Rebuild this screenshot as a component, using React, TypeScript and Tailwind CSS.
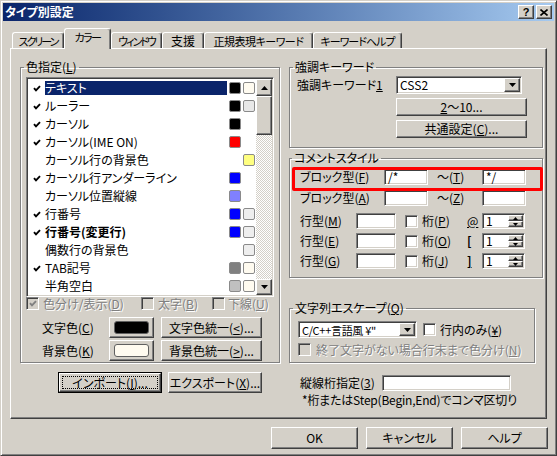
import React from "react";

const RAISED =
  "bg-[#d4d0c8] border border-t-white border-l-white border-r-[#404040] border-b-[#404040] shadow-[inset_-1px_-1px_0_#808080]";
const SUNKEN =
  "border border-t-[#808080] border-l-[#808080] border-r-white border-b-white shadow-[inset_1px_1px_0_#404040,inset_-1px_-1px_0_#d4d0c8]";
const GROUP = "border border-[#808080] shadow-[1px_1px_0_#fff,inset_1px_1px_0_#fff]";
const GREY = "text-[#808080] [text-shadow:1px_1px_0_#fff]";

type Kids = { children?: React.ReactNode; className?: string };

function U({ children }: Kids) {
  return <span className="underline underline-offset-1 decoration-1">{children}</span>;
}

function Tick({ color = "#000" }: { color?: string }) {
  return (
    <svg width="8" height="7" viewBox="0 0 8 7">
      <path d="M1 3.2 3 5.4 7 1.2" fill="none" stroke={color} strokeWidth="1.9" />
    </svg>
  );
}

function Arrow({ up = false }: { up?: boolean }) {
  return (
    <svg width="7" height="4" viewBox="0 0 7 4">
      <path d={up ? "M3.5 0 7 4H0Z" : "M0 0h7L3.5 4Z"} fill="#000" />
    </svg>
  );
}

function SmallArrow({ up = false }: { up?: boolean }) {
  return (
    <svg width="5" height="3" viewBox="0 0 5 3">
      <path d={up ? "M2.5 0 5 3H0Z" : "M0 0h5L2.5 3Z"} fill="#000" />
    </svg>
  );
}

function Btn({ children, className = "" }: Kids) {
  return <div className={`${RAISED} flex items-center justify-center whitespace-nowrap ${className}`}>{children}</div>;
}

function Edit({ children, className = "" }: Kids) {
  return <div className={`${SUNKEN} bg-white flex items-center pl-[3px] ${className}`}>{children}</div>;
}

function Combo({ children, className = "" }: Kids) {
  return (
    <div className={`${SUNKEN} bg-white flex p-[1px] ${className}`}>
      <div className="flex-1 min-w-0 flex items-center pl-[2px] whitespace-nowrap">{children}</div>
      <div className={`${RAISED} w-[16px] shrink-0 flex items-center justify-center`}>
        <Arrow />
      </div>
    </div>
  );
}

function Spin({ className = "" }: Kids) {
  return (
    <div className={`${SUNKEN} bg-white flex p-[1px] ${className}`}>
      <div className="flex-1 pl-[2px] flex items-center">1</div>
      <div className="w-[15px] flex flex-col">
        <div className={`${RAISED} flex-1 flex items-center justify-center`}>
          <SmallArrow up />
        </div>
        <div className={`${RAISED} flex-1 flex items-center justify-center`}>
          <SmallArrow />
        </div>
      </div>
    </div>
  );
}

function Check({ on = false, disabled = false, className = "" }: { on?: boolean; disabled?: boolean; className?: string }) {
  return (
    <span
      className={`${SUNKEN} w-[13px] h-[13px] shrink-0 flex items-center justify-center ${
        disabled ? "bg-[#d4d0c8]" : "bg-white"
      } ${className}`}
    >
      {on && <Tick color={disabled ? "#808080" : "#000"} />}
    </span>
  );
}

type Item = { label: React.ReactNode; check: boolean; fg?: string; bg?: string; sel?: boolean; bold?: boolean };

const items: Item[] = [
  { label: "テキスト", check: true, fg: "bg-black", bg: "bg-[#fffbf0]", sel: true },
  { label: "ルーラー", check: true, fg: "bg-black", bg: "bg-[#e8e8e8]" },
  { label: "カーソル", check: true, fg: "bg-black" },
  { label: "カーソル(IME ON)", check: true, fg: "bg-[#ff0000]" },
  { label: "カーソル行の背景色", check: false, bg: "bg-[#ffff80]" },
  { label: "カーソル行アンダーライン", check: true, fg: "bg-[#0000ff]" },
  { label: "カーソル位置縦線", check: false, fg: "bg-[#8080ff]" },
  { label: "行番号", check: true, fg: "bg-[#0000ff]", bg: "bg-[#eeeeee]" },
  { label: "行番号(変更行)", check: true, fg: "bg-[#0000ff]", bg: "bg-[#eeeeee]", bold: true },
  { label: "偶数行の背景色", check: false, bg: "bg-[#eeeeee]" },
  { label: "TAB記号", check: true, fg: "bg-[#808080]", bg: "bg-[#fffbf0]" },
  { label: "半角空白", check: false, fg: "bg-[#c0c0c0]", bg: "bg-[#fffbf0]" },
];

function Swatch({ color }: { color?: string }) {
  if (!color) return <span className="w-[12px] h-[12px] ml-[2px] shrink-0" />;
  return <span className={`w-[12px] h-[12px] ml-[2px] shrink-0 rounded-[2px] border border-[#8a8a8a] ${color}`} />;
}

function ColorList() {
  return (
    <div className={`${SUNKEN} bg-white w-[248px] h-[220px] flex p-[1px]`}>
      <div className="w-[228px] flex flex-col overflow-hidden">
        {items.map((it, i) => (
          <div key={i} className="flex items-center h-[18px] shrink-0">
            <div className="w-[17px] pl-[5px] flex items-center">{it.check && <Tick />}</div>
            <div
              className={`w-[182px] h-[14px] flex items-center whitespace-nowrap ${
                it.sel ? "bg-[#0a246a] text-white" : ""
              } ${it.bold ? "font-bold" : ""}`}
            >
              {it.label}
            </div>
            <Swatch color={it.fg} />
            <Swatch color={it.bg} />
          </div>
        ))}
      </div>
      <div className="w-[16px] flex flex-col bg-[image:repeating-conic-gradient(#d4d0c8_0%_25%,#fff_0%_50%)] bg-[length:2px_2px]">
        <div className={`${RAISED} h-[17px] flex items-center justify-center`}>
          <Arrow up />
        </div>
        <div className={`${RAISED} h-[39px]`} />
        <div className="flex-1" />
        <div className={`${RAISED} h-[16px] flex items-center justify-center`}>
          <Arrow />
        </div>
      </div>
    </div>
  );
}

function Tab({ children, sel = false, className = "" }: Kids & { sel?: boolean }) {
  return (
    <div
      className={`border-t border-l border-r border-t-white border-l-white border-r-[#404040] shadow-[inset_-1px_0_0_#808080] rounded-t-[3px] bg-[#d4d0c8] flex justify-center whitespace-nowrap ${
        sel ? "h-[21px] -mb-[1px] relative z-10 pt-[1px]" : "h-[16px] items-center"
      } ${className}`}
    >
      {children}
    </div>
  );
}

export default function App() {
  return (
    <div className="w-[557px] h-[456px] bg-[#d4d0c8] border border-t-[#d4d0c8] border-l-[#d4d0c8] border-r-[#404040] border-b-[#404040] shadow-[inset_1px_1px_0_#fff,inset_-1px_-1px_0_#808080] p-[2px] flex flex-col text-[12px] leading-[14px] text-black font-[family-name:'Noto_Sans_CJK_JP',sans-serif] [font-feature-settings:'palt'] overflow-hidden">
      {/* title bar */}
      <div className="h-[18px] shrink-0 flex items-center bg-linear-to-r from-[#0a246a] to-[#a6caf0] pl-[2px] pr-[2px]">
        <span className="text-white font-bold text-[12px]">タイプ別設定</span>
        <div className="ml-auto flex gap-[2px]">
          <div className={`${RAISED} w-[16px] h-[14px] flex items-center justify-center font-bold text-[11px] leading-none font-[family-name:'Liberation_Sans',sans-serif]`}>
            ?
          </div>
          <div className={`${RAISED} w-[16px] h-[14px] flex items-center justify-center`}>
            <svg width="8" height="7" viewBox="0 0 8 7">
              <path d="M0.5 0.5 7.5 6.5M7.5 0.5 0.5 6.5" stroke="#000" strokeWidth="1.6" />
            </svg>
          </div>
        </div>
      </div>

      {/* tabs */}
      <div className="mt-[7px] h-[20px] shrink-0 flex items-end pl-[9px] text-[11px]">
        <Tab className="w-[52px] tracking-[-2px]">スクリーン</Tab>
        <Tab sel className="w-[47px] tracking-[-1.5px]">カラー</Tab>
        <Tab className="w-[51px] tracking-[-2px]">ウィンドウ</Tab>
        <Tab className="w-[42px] text-[12px]">支援</Tab>
        <Tab className="w-[109px] tracking-[-0.5px]">正規表現キーワード</Tab>
        <Tab className="w-[89px] tracking-[-1px]">キーワードヘルプ</Tab>
      </div>

      {/* tab panel */}
      <div className="ml-[7px] w-[537px] h-[371px] shrink-0 border border-t-white border-l-white border-r-[#404040] border-b-[#404040] shadow-[inset_-1px_-1px_0_#808080] flex pl-[9px] pt-[11px]">
        {/* left column */}
        <div className="w-[261px] flex flex-col">
          <fieldset className={`${GROUP} w-[260px]`}>
            <legend className="ml-[3px] px-[2px] leading-[14px]">
              色指定(<U>L</U>)
            </legend>
            <div className="pl-[5px] pt-[3px] pb-[1px]">
              <ColorList />
              <div className="flex items-center h-[13px]">
                <div className="w-[115px] flex items-center">
                  <Check on disabled />
                  <span className={`ml-[4px] ${GREY}`}>
                    色分け/表示(<U>D</U>)
                  </span>
                </div>
                <div className="w-[71px] flex items-center">
                  <Check disabled />
                  <span className={`ml-[4px] ${GREY}`}>
                    太字(<U>B</U>)
                  </span>
                </div>
                <div className="flex items-center">
                  <Check disabled />
                  <span className={`ml-[3px] ${GREY}`}>
                    下線(<U>U</U>)
                  </span>
                </div>
              </div>
              <div className="mt-[7px] flex items-center h-[21px]">
                <span className="ml-[16px] w-[67px]">
                  文字色(<U>C</U>)
                </span>
                <div className={`${RAISED} w-[45px] h-[21px] flex items-center justify-center`}>
                  <div className="w-[35px] h-[13px] rounded-[3px] border border-[#606060] bg-black" />
                </div>
                <Btn className="ml-[7px] w-[101px] h-[21px]">
                  文字色統一(<U>&lt;</U>)...
                </Btn>
              </div>
              <div className="mt-[2px] flex items-center h-[21px]">
                <span className="ml-[16px] w-[67px]">
                  背景色(<U>K</U>)
                </span>
                <div className={`${RAISED} w-[45px] h-[21px] flex items-center justify-center`}>
                  <div className="w-[35px] h-[13px] rounded-[3px] border border-[#606060] bg-[#fffbf0]" />
                </div>
                <Btn className="ml-[7px] w-[101px] h-[21px]">
                  背景色統一(<U>&gt;</U>)...
                </Btn>
              </div>
            </div>
          </fieldset>
          <div className="mt-[9px] flex gap-[6px] pl-[38px]">
            <div className="w-[104px] h-[21px] border border-black">
              <div className={`${RAISED} w-full h-full p-[2px]`}>
                <div className="w-full h-full border border-dotted border-black flex items-center justify-center">
                  インポート(<U>I</U>)...
                </div>
              </div>
            </div>
            <Btn className="w-[94px] h-[21px]">
              エクスポート(<U>X</U>)...
            </Btn>
          </div>
        </div>

        {/* right column */}
        <div className="ml-[8px] w-[254px] flex flex-col">
          <fieldset className={`${GROUP} w-[254px]`}>
            <legend className="ml-[3px] px-[2px] leading-[14px]">強調キーワード</legend>
            <div className="pl-[7px] pt-[2px] pb-[9px]">
              <div className="flex items-center h-[18px]">
                <span className="w-[99px]">
                  強調キーワード<U>1</U>
                </span>
                <Combo className="w-[126px] h-[18px]">CSS2</Combo>
              </div>
              <Btn className="mt-[4px] ml-[99px] w-[131px] h-[18px]">
                <U>2</U>〜10...
              </Btn>
              <Btn className="mt-[4px] ml-[99px] w-[131px] h-[18px]">
                共通設定(<U>C</U>)...
              </Btn>
            </div>
          </fieldset>

          <fieldset className={`${GROUP} w-[254px] mt-[3px]`}>
            <legend className="ml-[2px] px-[2px] leading-[14px]">コメントスタイル</legend>
            <div className="relative pl-[10px] pt-[4px] pb-[8px]">
              <div className="flex items-center h-[16px]">
                <span className="w-[84px]">
                  ブロック型(<U>F</U>)
                </span>
                <Edit className="w-[44px] h-[16px]">/*</Edit>
                <span className="ml-[9px] w-[45px]">
                  〜(<U>T</U>)
                </span>
                <Edit className="w-[44px] h-[16px]">*/</Edit>
              </div>
              <div className="mt-[5px] flex items-center h-[16px]">
                <span className="w-[84px]">
                  ブロック型(<U>A</U>)
                </span>
                <Edit className="w-[44px] h-[16px]" />
                <span className="ml-[9px] w-[45px]">
                  〜(<U>Z</U>)
                </span>
                <Edit className="w-[44px] h-[16px]" />
              </div>
              {[
                { l: "M", p: "P", b: "@" },
                { l: "E", p: "O", b: "[" },
                { l: "G", p: "J", b: "]" },
              ].map((r, i) => (
                <div key={i} className={`${i === 0 ? "mt-[7px]" : "mt-[4px]"} flex items-center h-[16px]`}>
                  <span className="w-[56px]">
                    行型(<U>{r.l}</U>)
                  </span>
                  <Edit className="w-[40px] h-[16px]" />
                  <Check className="ml-[9px]" />
                  <span className="ml-[4px] w-[45px]">
                    桁(<U>{r.p}</U>)
                  </span>
                  <span className={`w-[15px] ${i === 0 ? "" : "font-bold"}`}>
                    <U>{r.b}</U>
                  </span>
                  <Spin className="w-[43px] h-[16px]" />
                </div>
              ))}
              <div className="absolute left-[2px] top-[2px] w-[251px] h-[24px] border-[3px] border-[#ff0000] rounded-[2px]" />
            </div>
          </fieldset>

          <fieldset className={`${GROUP} w-[246px] mt-[23px]`}>
            <legend className="ml-[3px] px-[2px] leading-[14px]">
              文字列エスケープ(<U>Q</U>)
            </legend>
            <div className="pl-[8px] pt-[6px] pb-[6px]">
              <div className="flex items-center h-[17px]">
                <Combo className="w-[119px] h-[17px] text-[11px] tracking-[-0.3px]">C/C++言語風 ¥"</Combo>
                <Check className="ml-[6px]" />
                <span className="ml-[4px]">
                  行内のみ(<U>¥</U>)
                </span>
              </div>
              <div className="mt-[5px] flex items-center h-[13px]">
                <Check disabled />
                <span className={`ml-[5px] ${GREY}`}>
                  終了文字がない場合行末まで色分け(<U>N</U>)
                </span>
              </div>
            </div>
          </fieldset>

          <div className="mt-[12px] flex items-center h-[16px] pl-[11px]">
            <span className="w-[82px]">
              縦線桁指定(<U>3</U>)
            </span>
            <Edit className="w-[129px] h-[16px]" />
          </div>
          <div className="mt-[2px] h-[14px] pl-[13px] whitespace-nowrap tracking-[-0.2px]">
            *桁またはStep(Begin,End)でコンマ区切り
          </div>
        </div>
      </div>

      {/* dialog buttons */}
      <div className="mt-[8px] flex gap-[8px] pl-[268px]">
        <Btn className="w-[87px] h-[22px]">OK</Btn>
        <Btn className="w-[87px] h-[22px]">キャンセル</Btn>
        <Btn className="w-[87px] h-[22px]">ヘルプ</Btn>
      </div>
    </div>
  );
}
